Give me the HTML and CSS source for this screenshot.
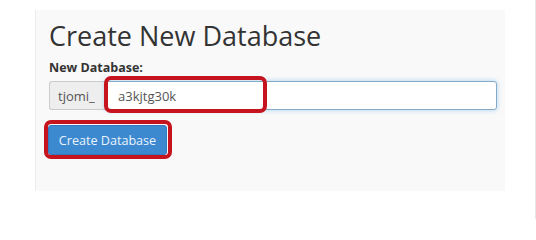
FILE: index.html
```html
<!DOCTYPE html>
<html>
<head>
<meta charset="utf-8">
<link rel="stylesheet" href="styles.css">
</head>
<body>
<div class="page">
  <section class="panel">
    <h1 class="title">Create New Database</h1>
    <label class="label" for="db">New Database:</label>
    <div class="input-group">
      <span class="addon">tjomi_</span>
      <input class="field" id="db" type="text" value="a3kjtg30k">
      <span class="highlight hl-input"></span>
    </div>
    <div class="btn-wrap">
      <button class="btn" type="button">Create Database</button>
      <span class="highlight hl-btn"></span>
    </div>
  </section>
</div>
</body>
</html>
```

FILE: styles.css
```css
html, body {
  margin: 0;
  padding: 0;
  background: #ffffff;
}

.page {
  box-sizing: border-box;
  width: 536px;
  height: 219px;
  padding: 10px 0 0 35px;
  border-right: 1px solid #e6e6e6;
  font-family: "Open Sans", "Liberation Sans", sans-serif;
}

.panel {
  box-sizing: border-box;
  width: 470px;
  height: 181px;
  padding: 10px 0 0 13px;
  background: #f9f9f9;
  border-left: 1px solid #ececec;
  display: flex;
  flex-direction: column;
  align-items: flex-start;
}

.title {
  margin: 0;
  font-size: 27px;
  line-height: 32px;
  font-weight: 400;
  color: #333333;
}

.label {
  margin-top: 8px;
  font-size: 12.5px;
  line-height: 16px;
  font-weight: 700;
  color: #333333;
}

.input-group {
  position: relative;
  margin-top: 5px;
  width: 448px;
  height: 29px;
  display: flex;
}

.addon {
  box-sizing: border-box;
  width: 56px;
  padding-left: 8px;
  display: flex;
  align-items: center;
  background: #eeeeee;
  border: 1px solid #cccccc;
  border-right: none;
  border-radius: 3px 0 0 3px;
  font-size: 13px;
  color: #555555;
}

.field {
  box-sizing: border-box;
  flex: 1;
  height: 29px;
  margin: 0;
  padding: 0 12px;
  border: 1px solid #86abc9;
  border-radius: 0 3px 3px 0;
  background: #ffffff;
  box-shadow: 0 0 5px rgba(102, 175, 233, 0.55);
  font-family: inherit;
  font-size: 13px;
  color: #555555;
  outline: none;
}

.highlight {
  position: absolute;
  box-sizing: border-box;
  border: 4.5px solid #c5141d;
  border-radius: 7px;
  pointer-events: none;
}

.hl-input {
  left: 55px;
  top: -5px;
  width: 163px;
  height: 37px;
}

.btn-wrap {
  position: relative;
  margin-top: 15px;
  margin-left: -1px;
}

.btn {
  display: block;
  box-sizing: border-box;
  width: 119px;
  height: 30px;
  margin: 0;
  padding: 0;
  border: 1px solid #3479bd;
  border-radius: 3px;
  background: #3d89d0;
  font-family: inherit;
  font-size: 12.6px;
  color: #eaf3fb;
}

.hl-btn {
  left: -4px;
  top: -5px;
  right: -5px;
  bottom: -4px;
}
```
